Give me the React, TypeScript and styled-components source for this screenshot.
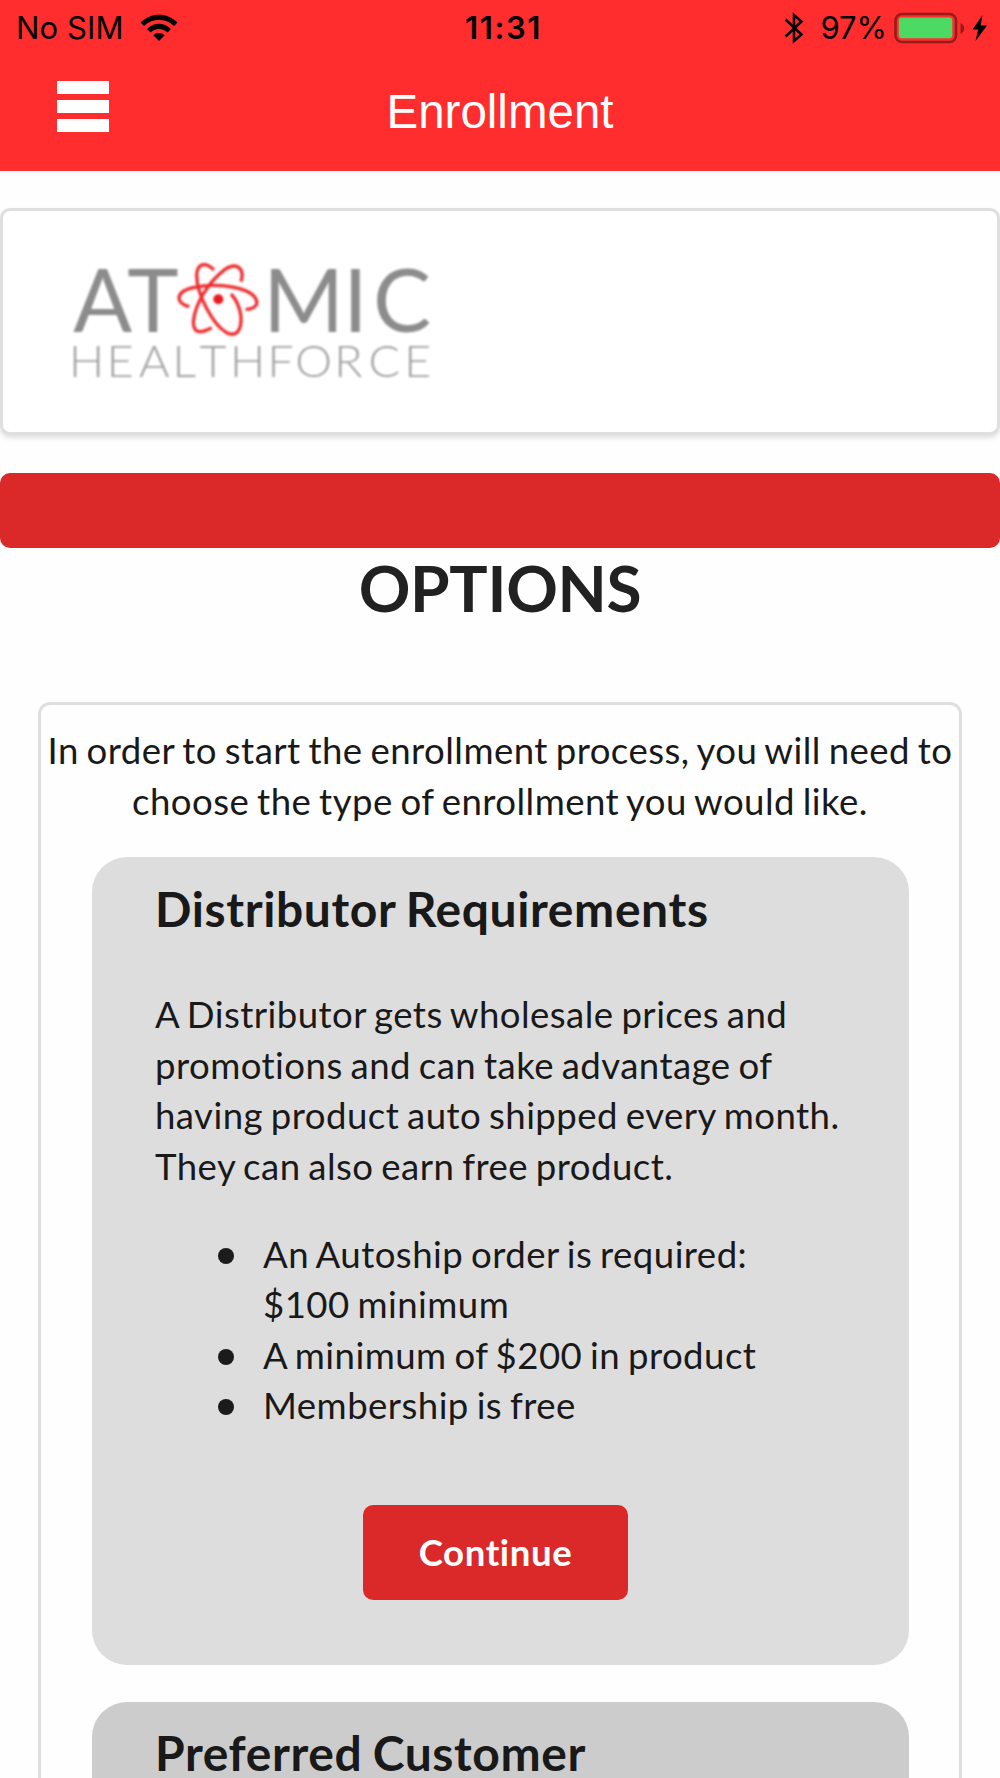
import { ReactNode } from 'react';
import styled, { createGlobalStyle } from 'styled-components';

const GlobalStyle = createGlobalStyle`
  * {
    box-sizing: border-box;
  }

  body {
    margin: 0;
    background-color: #fefefe;
    color: #191919;
    font-family: Lato, 'Liberation Sans', sans-serif;
    font-size: 36.6px;
    line-height: 50.6px;
    letter-spacing: 0.45px;
    word-spacing: -2px;
  }
`;

const Screen = styled.div`
  width: 1000px;
  height: 1778px;
  overflow: hidden;
`;

const TopBar = styled.header`
  height: 171px;
  background-color: #ff2d2d;
`;

const StatusBar = styled.div`
  display: grid;
  grid-template-columns: 1fr auto 1fr;
  align-items: center;
  height: 54px;
  padding: 0 13px 0 16px;
  color: #000000;
  font-family: Inter, sans-serif;
  font-size: 31px;
  line-height: 56px;
  letter-spacing: 0;
  word-spacing: 0;
`;

const StatusGroup = styled.div<{ $end?: boolean }>`
  display: flex;
  align-items: center;
  justify-content: ${({ $end }) => ($end ? 'flex-end' : 'flex-start')};
`;

const Carrier = styled.span`
  margin-right: 17px;
  letter-spacing: 0.1px;
`;

const Clock = styled.span`
  padding-left: 4px;
  font-weight: 600;
  letter-spacing: 1.6px;
`;

const BatteryLevel = styled.span`
  margin: 0 7px 0 16px;
`;

const NavBar = styled.nav`
  display: grid;
  grid-template-columns: 1fr auto 1fr;
  align-items: center;
  height: 117px;
  padding: 0 57px;
`;

const MenuButton = styled.button`
  display: flex;
  flex-direction: column;
  gap: 6px;
  width: 52px;
  margin-bottom: 12px;
  padding: 0;
  border: none;
  background: none;
`;

const MenuBar = styled.span`
  height: 13px;
  background-color: #ffffff;
`;

const Title = styled.h1`
  margin: 0;
  padding-bottom: 2px;
  color: #ffffff;
  font-family: 'Liberation Sans', Arial, sans-serif;
  font-size: 47.5px;
  font-weight: 400;
  line-height: 115px;
  letter-spacing: 0;
`;

const LogoCard = styled.div`
  height: 227px;
  margin-top: 37px;
  padding: 29px 47px;
  border: 3px solid #dfdfdf;
  border-radius: 10px;
  background-color: #ffffff;
  box-shadow: 0 3px 5px rgba(34, 36, 38, 0.14);
`;

const LogoSvg = styled.svg`
  display: block;
  filter: blur(0.8px);
  letter-spacing: 0;
`;

const Banner = styled.div`
  height: 75px;
  margin-top: 38px;
  border-radius: 10px;
  background-color: #db2828;
`;

const PageHeading = styled.h2`
  margin: 0;
  color: #212121;
  font-size: 64px;
  font-weight: 700;
  line-height: 80px;
  letter-spacing: -0.3px;
  text-align: center;
`;

const Segment = styled.section`
  height: 1200px;
  margin: 74px 38px 0;
  padding-top: 20px;
  border: 3px solid #dfdfdf;
  border-radius: 12px;
`;

const Intro = styled.p`
  margin: 0;
  text-align: center;
`;

const OptionCard = styled.article<{ $dark?: boolean }>`
  height: 808px;
  margin: ${({ $dark }) => ($dark ? '37px' : '31px')} 50px 0 51px;
  padding: ${({ $dark }) => ($dark ? '20px' : '21px')} 64px 0 63px;
  border-radius: 35px;
  background-color: ${({ $dark }) => ($dark ? '#cccccc' : '#dddddd')};
`;

const OptionHeading = styled.h3`
  margin: 0;
  font-size: 48px;
  font-weight: 700;
  line-height: 62px;
  letter-spacing: 0.6px;
`;

const OptionText = styled.p`
  margin: 49px 0 0;
`;

const Requirements = styled.ul`
  margin: 37px 0 0;
  padding: 0 40px 0 63px;
  list-style: none;
`;

const Requirement = styled.li`
  display: flex;
`;

const Bullet = styled.span`
  flex: none;
  width: 16px;
  height: 16px;
  margin: 19px 29px 0 0;
  border-radius: 50%;
  background-color: #1b1b1b;
`;

const ContinueButton = styled.button`
  display: block;
  width: 265px;
  height: 95px;
  margin: 74px 0 0 208px;
  padding: 0;
  border: none;
  border-radius: 10px;
  background-color: #db2828;
  color: #ffffff;
  font-family: inherit;
  font-size: 36.6px;
  font-weight: 700;
  letter-spacing: 0.6px;
`;

const WifiIcon = () => (
  <svg width="38" height="28" viewBox="0 0 38 28">
    <path d="M0.5 8.5 C11 -2 27 -2 37.5 8.5 L34 12 C25.5 3.8 12.5 3.8 4 12 Z" />
    <path d="M7 15 C14 8 24 8 31 15 L27.5 18.5 C22.5 13.8 15.5 13.8 10.5 18.5 Z" />
    <path d="M13.3 21.2 C16.5 18.2 21.5 18.2 24.7 21.2 L19 27 Z" />
  </svg>
);

const BluetoothIcon = () => (
  <svg width="20" height="32" viewBox="0 0 20 32">
    <path
      d="M1.5 7.5 L17.5 22.5 L10 29 V3 L17.5 9.5 L1.5 24.5"
      fill="none"
      stroke="#000000"
      strokeWidth="2.5"
    />
  </svg>
);

const BatteryIcon = () => (
  <svg width="78" height="32" viewBox="0 0 78 32">
    <rect x="1.5" y="2" width="60.5" height="28" rx="6.5" fill="none" stroke="#971b1b" strokeWidth="2.6" />
    <rect x="4.8" y="5.5" width="53.5" height="20.8" rx="3" fill="#4cd964" />
    <path d="M66.5 11 C71.5 13 71.5 20 66.5 22 Z" fill="#971b1b" />
  </svg>
);

const BoltIcon = () => (
  <svg width="15" height="26" viewBox="0 0 15 26">
    <path d="M10.5 0 L0.5 14.5 H6.2 L3.5 26 L15 10.5 H8.7 Z" />
  </svg>
);

const Logo = () => (
  <LogoSvg width="400" height="160" viewBox="0 0 1200 480" fontFamily="Lato, sans-serif">
    <text x="70 232 640 880 969" y="275" fontSize="261" fill="#8c8c8c">
      ATMIC
    </text>
    <text
      x="52 155 243 334 408 491 593 669 775 869 966"
      y="411"
      fontSize="127"
      fontWeight="300"
      fill="#a0a0a0"
      transform="scale(1.1 1)"
    >
      HEALTHFORCE
    </text>
    <g fill="none" stroke="#ee2b2d" strokeWidth="10">
      <path d="M418 200 C375 190 375 155 430 143 C500 128 590 140 615 172 C630 195 612 208 587 208" />
      <path d="M492 90 C470 68 442 65 440 105 C440 165 490 255 530 278 C560 293 575 270 573 230 C570 205 560 180 543 162" />
      <path d="M573 125 C585 85 560 65 525 88 C470 130 435 195 430 245 C430 280 450 282 485 263" />
    </g>
    <circle cx="505" cy="178" r="15" fill="#e8191c" />
  </LogoSvg>
);

type OptionProps = {
  title: string;
  dark?: boolean;
  children?: ReactNode;
};

const Option: React.FC<OptionProps> = ({ title, dark, children }) => (
  <OptionCard $dark={dark}>
    <OptionHeading>{title}</OptionHeading>
    {children}
  </OptionCard>
);

const requirements = [
  'An Autoship order is required: $100 minimum',
  'A minimum of $200 in product',
  'Membership is free',
];

const App = () => {
  return (
    <Screen>
      <GlobalStyle />
      <TopBar>
        <StatusBar>
          <StatusGroup>
            <Carrier>No SIM</Carrier>
            <WifiIcon />
          </StatusGroup>
          <Clock>11:31</Clock>
          <StatusGroup $end>
            <BluetoothIcon />
            <BatteryLevel>97%</BatteryLevel>
            <BatteryIcon />
            <BoltIcon />
          </StatusGroup>
        </StatusBar>
        <NavBar>
          <MenuButton aria-label="Menu">
            <MenuBar />
            <MenuBar />
            <MenuBar />
          </MenuButton>
          <Title>Enrollment</Title>
        </NavBar>
      </TopBar>

      <LogoCard>
        <Logo />
      </LogoCard>
      <Banner />
      <PageHeading>OPTIONS</PageHeading>

      <Segment>
        <Intro>
          In order to start the enrollment process, you will need to
          <br />
          choose the type of enrollment you would like.
        </Intro>

        <Option title="Distributor Requirements">
          <OptionText>
            A Distributor gets wholesale prices and promotions and can take advantage of having product auto shipped
            every month. They can also earn free product.
          </OptionText>
          <Requirements>
            {requirements.map((requirement) => (
              <Requirement key={requirement}>
                <Bullet />
                <span>{requirement}</span>
              </Requirement>
            ))}
          </Requirements>
          <ContinueButton>Continue</ContinueButton>
        </Option>

        <Option title="Preferred Customer" dark />
      </Segment>
    </Screen>
  );
};

export default App;
